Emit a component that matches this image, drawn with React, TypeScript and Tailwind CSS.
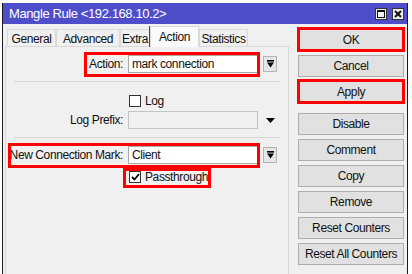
import React from 'react'

function ComboArrow() {
  return (
    <div className="w-[14px] h-[16px] flex items-center justify-center bg-[#e6e6e6] border border-[#b4b4b4]">
      <svg width="7" height="8" viewBox="0 0 7 8">
        <rect x="0" y="0" width="7" height="1.6" fill="#000" />
        <path d="M0 2.6 L7 2.6 L3.5 7.5 Z" fill="#000" />
      </svg>
    </div>
  )
}

function Field({ value, disabled }: { value?: string; disabled?: boolean }) {
  return (
    <div
      className={`w-[130px] h-[18px] flex items-center px-[3px] border ${
        disabled ? 'bg-[#f0f0f0] border-[#c4c4c4]' : 'bg-white border-[#a9a9a9]'
      }`}
    >
      {value}
    </div>
  )
}

function Checkbox({ checked }: { checked?: boolean }) {
  return (
    <div className="w-[12px] h-[12px] bg-white border border-[#333] flex items-center justify-center">
      {checked && (
        <svg width="9" height="8" viewBox="0 0 9 8">
          <path d="M1 4 L3.5 6.5 L8 1" stroke="#000" strokeWidth="1.8" fill="none" />
        </svg>
      )}
    </div>
  )
}

function Btn({ label, className = '' }: { label: string; className?: string }) {
  return (
    <div
      className={`w-[106px] h-[22px] flex items-center justify-center bg-[#e1e1e1] border border-[#adadad] ${className}`}
    >
      {label}
    </div>
  )
}

function Tab({ label, w, active }: { label: string; w: string; active?: boolean }) {
  return (
    <div
      className={`${w} flex items-center justify-center border border-[#d9d9d9] ${
        active
          ? 'h-[21px] bg-[#fafafa] border-b-[#fafafa] relative z-10'
          : 'h-[18px] bg-[#f0f0f0] border-b-0'
      }`}
    >
      {label}
    </div>
  )
}

function RedBox({ className }: { className: string }) {
  return <div className={`absolute border-[3px] border-[#ff0000] pointer-events-none ${className}`} />
}

export default function App() {
  return (
    <div className="relative w-[412px] h-[274px] overflow-hidden bg-white font-['Liberation_Sans',Arial,sans-serif] text-[12px] leading-[14px] tracking-[-0.4px] text-[#111]">
      <div className="ml-[2px] mt-[3px] w-[406px] h-[300px] border-x border-[#1c1c1c] bg-[#f0f0f0] flex flex-col">
        {/* title bar */}
        <div className="h-[21px] bg-[#4e4ecb] flex items-center justify-between pl-[6px] pr-[3px]">
          <span className="text-white text-[13px]">Mangle Rule &lt;192.168.10.2&gt;</span>
          <div className="flex gap-[5px]">
            <div className="w-[12px] h-[12px] bg-[#f0f0f0] border border-[#333] flex items-center justify-center">
              <div className="w-[8px] h-[8px] border border-[#111] border-t-2" />
            </div>
            <div className="w-[12px] h-[12px] bg-[#f0f0f0] border border-[#333] flex items-center justify-center">
              <svg width="8" height="8" viewBox="0 0 8 8">
                <path d="M1 1 L7 7 M7 1 L1 7" stroke="#111" strokeWidth="2" />
              </svg>
            </div>
          </div>
        </div>

        <div className="flex flex-1">
          {/* left: tabs + panel */}
          <div className="w-[286px] flex flex-col">
            <div className="h-[23px] flex items-end pl-[4px] -mb-px">
              <Tab label="General" w="w-[49px]" />
              <Tab label="Advanced" w="w-[64px]" />
              <Tab label="Extra" w="w-[30px]" />
              <Tab label="Action" w="w-[49px]" active />
              <Tab label="Statistics" w="w-[49px]" />
            </div>
            <div className="ml-[2px] w-[284px] flex-1 border border-[#d9d9d9] flex flex-col">
              <div className="mt-[8px] h-[18px] flex items-center">
                <div className="w-[117px] text-right">Action:</div>
                <div className="ml-[5px]">
                  <Field value="mark connection" />
                </div>
                <div className="ml-[5px]">
                  <ComboArrow />
                </div>
              </div>

              <div className="mt-[8px] ml-[8px] mr-[7px] h-px bg-[#d7d7d7]" />

              <div className="mt-[13px] h-[12px] flex items-center">
                <div className="w-[123px]" />
                <Checkbox />
                <span className="ml-[4px]">Log</span>
              </div>

              <div className="mt-[4px] h-[18px] flex items-center">
                <div className="w-[117px] text-right">Log Prefix:</div>
                <div className="ml-[5px]">
                  <Field disabled />
                </div>
                <svg className="ml-[8px]" width="9" height="5" viewBox="0 0 9 5">
                  <path d="M0 0 L9 0 L4.5 5 Z" fill="#000" />
                </svg>
              </div>

              <div className="mt-[8px] ml-[8px] mr-[7px] h-px bg-[#d7d7d7]" />

              <div className="mt-[8px] h-[18px] flex items-center">
                <div className="w-[117px] text-right">New Connection Mark:</div>
                <div className="ml-[5px]">
                  <Field value="Client" />
                </div>
                <div className="ml-[5px]">
                  <ComboArrow />
                </div>
              </div>

              <div className="mt-[7px] h-[12px] flex items-center">
                <div className="w-[123px]" />
                <Checkbox checked />
                <span className="ml-[4px]">Passthrough</span>
              </div>
            </div>
          </div>

          {/* right: buttons */}
          <div className="w-[118px] pl-[9px] pt-[5px] flex flex-col gap-[4px]">
            <Btn label="OK" />
            <Btn label="Cancel" />
            <Btn label="Apply" />
            <Btn label="Disable" className="mt-[6px]" />
            <Btn label="Comment" />
            <Btn label="Copy" />
            <Btn label="Remove" />
            <Btn label="Reset Counters" />
            <Btn label="Reset All Counters" />
          </div>
        </div>
      </div>

      {/* red annotation boxes */}
      <RedBox className="left-[149px] top-[26px] w-[50px] h-[21px]" />
      <RedBox className="left-[84px] top-[52px] w-[176px] h-[25px]" />
      <RedBox className="left-[8px] top-[143px] w-[252px] h-[25px]" />
      <RedBox className="left-[123px] top-[168px] w-[88px] h-[20px]" />
      <RedBox className="left-[297px] top-[27px] w-[108px] h-[25px]" />
      <RedBox className="left-[297px] top-[79px] w-[108px] h-[25px]" />
    </div>
  )
}
